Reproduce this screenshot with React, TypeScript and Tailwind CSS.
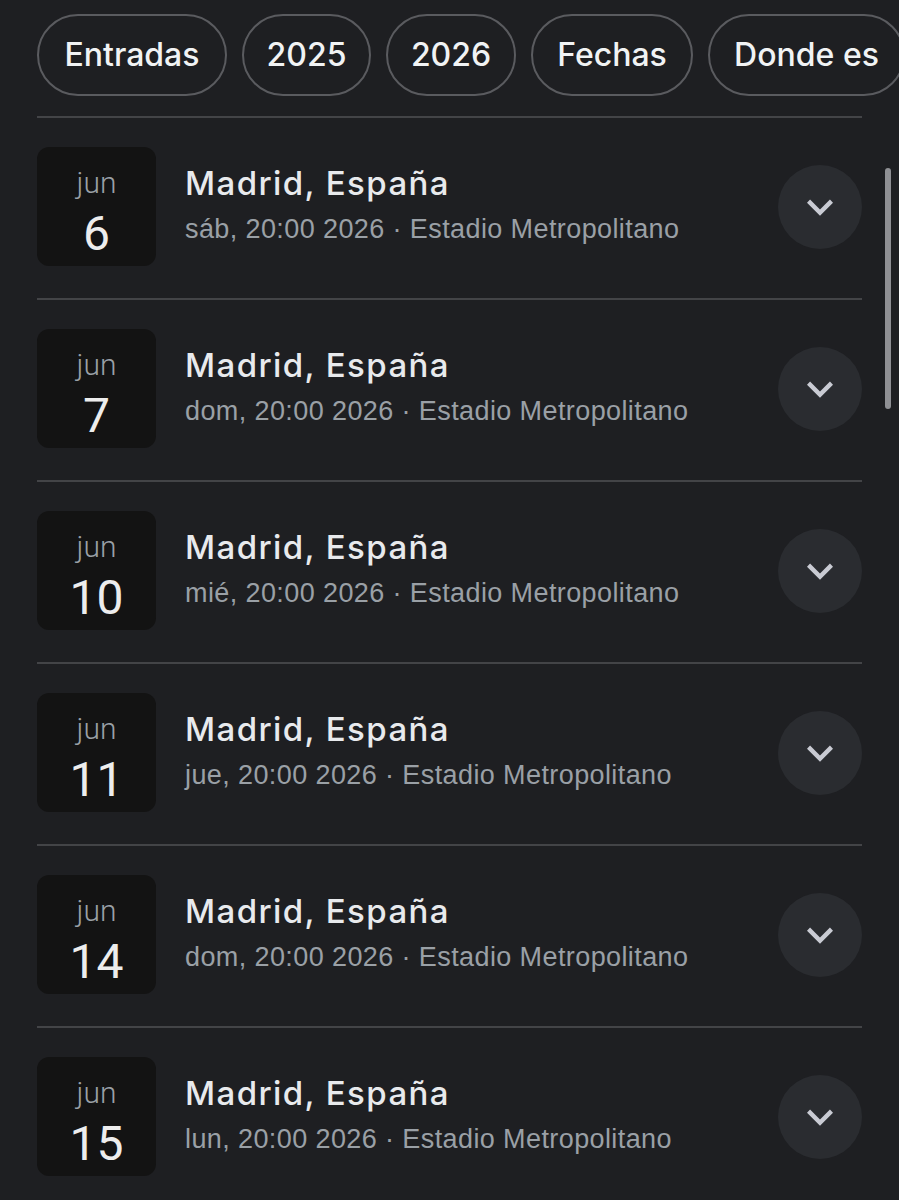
type Show = {
  month: string;
  day: string;
  weekday: string;
};

const filters = [
  { label: "Entradas", w: "w-[190px]" },
  { label: "2025", w: "w-[129px]" },
  { label: "2026", w: "w-[130px]" },
  { label: "Fechas", w: "w-[162px]" },
  { label: "Donde es", w: "w-[197px]" },
];

const shows: Show[] = [
  { month: "jun", day: "6", weekday: "sáb" },
  { month: "jun", day: "7", weekday: "dom" },
  { month: "jun", day: "10", weekday: "mié" },
  { month: "jun", day: "11", weekday: "jue" },
  { month: "jun", day: "14", weekday: "dom" },
  { month: "jun", day: "15", weekday: "lun" },
];

const inter = { fontFamily: "Inter, 'Open Sans', sans-serif" };
const roboto = { fontFamily: "Roboto, sans-serif" };

// chevron "expand_more" de Material
function ExpandMore() {
  return (
    <svg width="52" height="52" viewBox="0 0 24 24" fill="#c9cbd3">
      <path d="M16.59 8.59L12 13.17 7.41 8.59 6 10l6 6 6-6z" />
    </svg>
  );
}

function ShowRow({ show }: { show: Show }) {
  return (
    <div className="border-t-2 border-[#434447] pt-[29px] pb-[32px] flex items-start">
      {/* Caja de la fecha */}
      <div className="w-[119px] h-[119px] shrink-0 rounded-[12px] bg-[#131313] flex flex-col items-center pt-[21px]">
        <span className="text-[30px] leading-[30px] font-light text-[#9aa0a6]" style={roboto}>
          {show.month}
        </span>
        <span className="mt-[10px] text-[48px] leading-[52px] text-[#ededed]" style={roboto}>
          {show.day}
        </span>
      </div>

      <div className="flex-1 pl-[29px] pt-[16px]">
        <div
          className="text-[33px] leading-[40px] font-medium tracking-[1.4px] text-[#e8eaed]"
          style={inter}
        >
          Madrid, España
        </div>
        <div
          className="mt-[9px] text-[27px] leading-[34px] tracking-[0.4px] text-[#9aa0a6]"
          style={{ fontFamily: "'Liberation Sans', Arial, sans-serif" }}
        >
          {show.weekday}, 20:00 2026 · Estadio Metropolitano
        </div>
      </div>

      <button
        aria-label="Ver más"
        className="mt-[18px] w-[84px] h-[84px] shrink-0 rounded-full bg-[#2a2c30] flex items-center justify-center"
      >
        <ExpandMore />
      </button>
    </div>
  );
}

export default function App() {
  return (
    <div className="relative w-[899px] h-[1200px] overflow-hidden bg-[#1e1f22]">
      {/* Filtros ----------------------------- */}
      <div className="flex gap-[15px] pl-[37px] pt-[14px] pb-[20px]">
        {filters.map((f) => (
          <div
            key={f.label}
            className={`${f.w} shrink-0 h-[82px] rounded-full border-2 border-[#5a5b5f] flex items-center justify-center text-[32px] font-medium text-[#f1f3f4]`}
            style={inter}
          >
            {f.label}
          </div>
        ))}
      </div>

      {/* Lista de conciertos ----------------- */}
      <div className="ml-[37px] w-[825px]">
        {shows.map((s) => (
          <ShowRow key={s.day} show={s} />
        ))}
      </div>

      {/* Barra de scroll */}
      <div className="absolute left-[885px] top-[168px] w-[6px] h-[241px] rounded-full bg-[#8f9094]" />
    </div>
  );
}
